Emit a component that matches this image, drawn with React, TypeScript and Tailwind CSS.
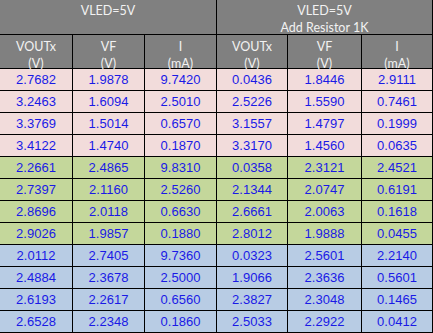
import React from "react";

const rows: { bg: string; v: string[] }[] = [
  { bg: "bg-[#f2dcdb]", v: ["2.7682", "1.9878", "9.7420", "0.0436", "1.8446", "2.9111"] },
  { bg: "bg-[#f2dcdb]", v: ["3.2463", "1.6094", "2.5010", "2.5226", "1.5590", "0.7461"] },
  { bg: "bg-[#f2dcdb]", v: ["3.3769", "1.5014", "0.6570", "3.1557", "1.4797", "0.1999"] },
  { bg: "bg-[#f2dcdb]", v: ["3.4122", "1.4740", "0.1870", "3.3170", "1.4560", "0.0635"] },
  { bg: "bg-[#c4d79b]", v: ["2.2661", "2.4865", "9.8310", "0.0358", "2.3121", "2.4521"] },
  { bg: "bg-[#c4d79b]", v: ["2.7397", "2.1160", "2.5260", "2.1344", "2.0747", "0.6191"] },
  { bg: "bg-[#c4d79b]", v: ["2.8696", "2.0118", "0.6630", "2.6661", "2.0063", "0.1618"] },
  { bg: "bg-[#c4d79b]", v: ["2.9026", "1.9857", "0.1880", "2.8012", "1.9888", "0.0455"] },
  { bg: "bg-[#b8cce4]", v: ["2.0112", "2.7405", "9.7360", "0.0323", "2.5601", "2.2140"] },
  { bg: "bg-[#b8cce4]", v: ["2.4884", "2.3678", "2.5000", "1.9066", "2.3636", "0.5601"] },
  { bg: "bg-[#b8cce4]", v: ["2.6193", "2.2617", "0.6560", "2.3827", "2.3048", "0.1465"] },
  { bg: "bg-[#b8cce4]", v: ["2.6528", "2.2348", "0.1860", "2.5033", "2.2922", "0.0412"] },
];

const sub = [
  ["VOUTx", "(V)"],
  ["VF", "(V)"],
  ["I", "(mA)"],
  ["VOUTx", "(V)"],
  ["VF", "(V)"],
  ["I", "(mA)"],
];

const head = "bg-[#808080] text-[#f2f2f2] text-center leading-[17px] text-[12.5px] font-['Lato',sans-serif]";

export default function App() {
  return (
    <div
      className="grid w-[433px] h-[333px] bg-black gap-px pr-px pb-px grid-cols-[72px_71px_71px_70px_73px_70px] grid-rows-[34px_33px_repeat(12,21px)] text-[13px]"
      style={{ fontFamily: '"Liberation Sans", Arial, sans-serif' }}
    >
      <div className={`col-span-3 pt-[2px] ${head}`}>VLED=5V</div>
      <div className={`col-span-3 pt-[2px] ${head}`}>
        <div>VLED=5V</div>
        <div>Add Resistor 1K</div>
      </div>
      {sub.map((s, i) => (
        <div key={i} className={`pt-[3px] ${head}`}>
          <div>{s[0]}</div>
          <div>{s[1]}</div>
        </div>
      ))}
      {rows.map((r, ri) =>
        r.v.map((v, ci) => (
          <div key={ri + "-" + ci} className={`${r.bg} text-[#1a1ae6] flex items-center justify-center leading-none`}>
            {v}
          </div>
        ))
      )}
    </div>
  );
}
